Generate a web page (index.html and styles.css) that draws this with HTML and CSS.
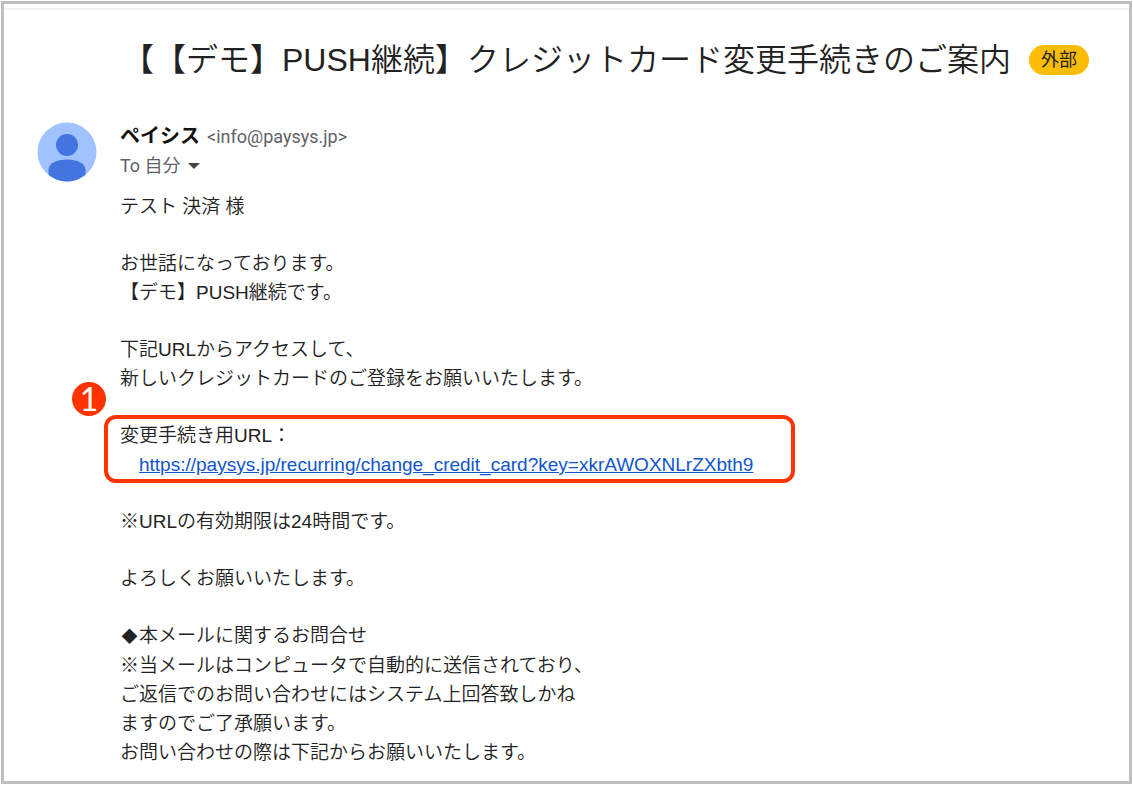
FILE: index.html
```
<!DOCTYPE html>
<html lang="ja">
<head>
  <meta charset="UTF-8">
  <meta name="viewport" content="width=device-width, initial-scale=1.0">
  <title>クレジットカード変更手続きのご案内</title>
  <link rel="stylesheet" href="styles.css">
</head>
<body>
  <main class="mail">
    <header class="mail-header">
      <h1 class="subject">【【デモ】PUSH継続】クレジットカード変更手続きのご案内</h1>
      <span class="label">外部</span>
    </header>

    <div class="message">
      <svg class="avatar" viewBox="0 0 60 60" aria-hidden="true">
        <clipPath id="circle"><circle cx="30" cy="30" r="29.5"/></clipPath>
        <g clip-path="url(#circle)">
          <rect width="60" height="60" fill="#a0c3ff"/>
          <circle cx="30" cy="23" r="11" fill="#4374e0"/>
          <path d="M11.500 60V48C11.500 41 20 37.500 30 37.500S48.500 41 48.500 48V60Z" fill="#4374e0"/>
        </g>
      </svg>

      <div class="content">
        <div class="sender">
          <span class="name">ペイシス</span>
          <span class="address">&lt;info@paysys.jp&gt;</span>
        </div>
        <button class="recipient" type="button">To 自分
          <svg class="arrow" viewBox="0 0 12 6" aria-hidden="true"><path d="M0 0H12L6 6Z" fill="#444"/></svg>
        </button>

        <div class="text">
          <p>テスト 決済 様</p>
          <p>お世話になっております。<br>【デモ】PUSH継続です。</p>
          <p>下記URLからアクセスして、<br>新しいクレジットカードのご登録をお願いいたします。</p>
          <div class="url-block">
            <span class="step">1</span>
            変更手続き用URL：<br>
            <a class="url" href="#">https://paysys.jp/recurring/change_credit_card?key=xkrAWOXNLrZXbth9</a>
          </div>
          <p>※URLの有効期限は24時間です。</p>
          <p>よろしくお願いいたします。</p>
          <p><span class="bullet">◆</span>本メールに関するお問合せ<br>
            ※当メールはコンピュータで自動的に送信されており、<br>
            ご返信でのお問い合わせにはシステム上回答致しかね<br>
            ますのでご了承願います。<br>
            お問い合わせの際は下記からお願いいたします。</p>
        </div>
      </div>
    </div>
  </main>
</body>
</html>
```

FILE: styles.css
```
* {
  box-sizing: border-box;
}

body {
  margin: 1px;
  background: #fff;
  color: #222;
  font-family: "Liberation Sans", "Noto Sans CJK JP", sans-serif;
  text-spacing-trim: space-all;
}

.mail {
  min-height: calc(100vh - 2px);
  padding-top: 4px;
  border: 3px solid #bfbfbf;
}

.mail-header {
  display: flex;
  align-items: center;
  gap: 18px;
  padding: 26px 20px 0 118px;
  border-top: 2px solid #f1f1f1;
}

.subject {
  margin: 0;
  font-size: 32px;
  font-weight: 350;
  line-height: 48px;
}

.label {
  padding: 0 12px;
  border-radius: 15px;
  background: #fbbc04;
  font-size: 18px;
  line-height: 30px;
  white-space: nowrap;
}

.message {
  display: flex;
  align-items: flex-start;
  gap: 23px;
  padding: 38px 32px 8px 33px;
}

.avatar {
  flex: none;
  width: 60px;
  height: 60px;
}

.content {
  flex: 1;
}

.sender {
  display: flex;
  align-items: center;
  gap: 7px;
  line-height: 29px;
}

.name {
  color: #111;
  font-size: 20px;
  font-weight: bold;
}

.address {
  color: #5f6368;
  font-family: Roboto, sans-serif;
  font-size: 18px;
}

.recipient {
  display: flex;
  align-items: center;
  gap: 7px;
  padding: 0;
  border: 0;
  background: none;
  color: #5f6368;
  font-family: Roboto, "Noto Sans CJK JP", sans-serif;
  font-size: 18px;
  line-height: 29px;
}

.arrow {
  width: 12px;
  height: 6px;
}

.text {
  display: flex;
  flex-direction: column;
  gap: 28px;
  padding-top: 12px;
  font-size: 19px;
  font-weight: 350;
  line-height: 29px;
}

.text p {
  margin: 0;
}

.url-block {
  position: relative;
  width: fit-content;
  margin: -6px 0 -4px -16px;
  padding: 2px 38px 0 12px;
  border: 4px solid #ff3300;
  border-radius: 12px;
}

.step {
  position: absolute;
  top: -37px;
  left: -36px;
  width: 34px;
  height: 34px;
  border-radius: 50%;
  background: #ff3300;
  color: #fff;
  font-family: Lato, sans-serif;
  font-size: 32px;
  font-weight: 400;
  line-height: 34px;
  text-align: center;
}

.url {
  margin-left: 19px;
  color: #1155cc;
}

.bullet {
  display: inline-block;
  width: 19px;
  font-size: 16px;
  text-align: center;
}
```
